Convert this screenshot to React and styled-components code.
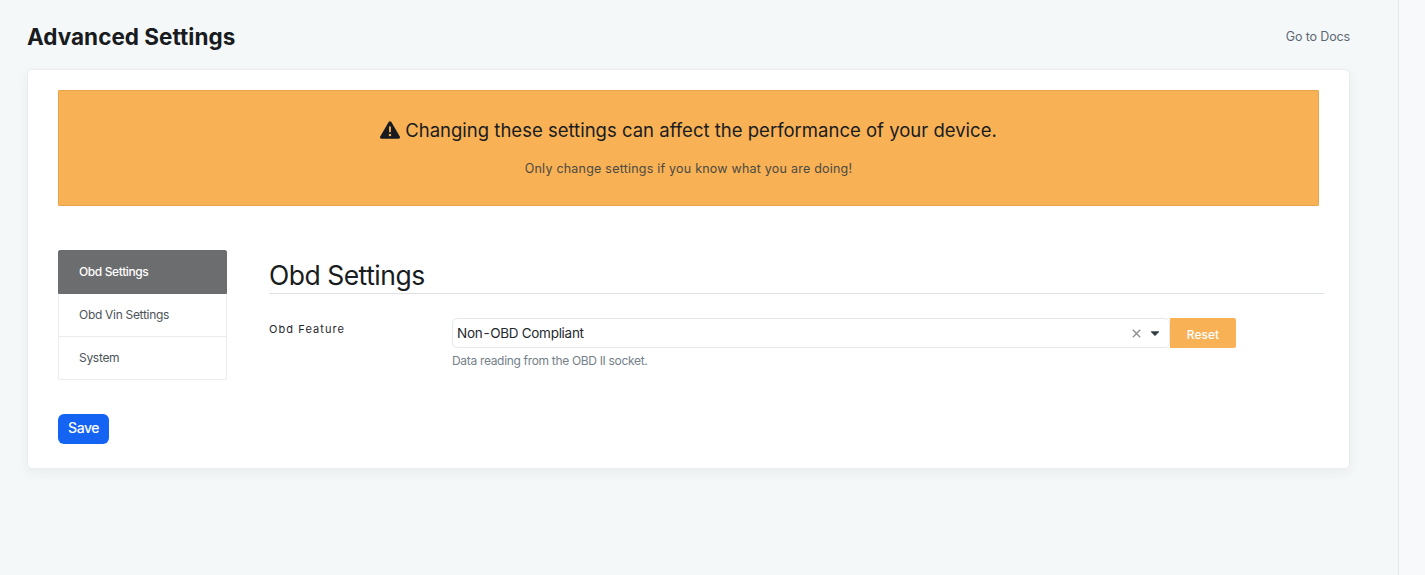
import React from "react";
import styled, { createGlobalStyle } from "styled-components";
import { FaTriangleExclamation } from "react-icons/fa6";

const GlobalStyle = createGlobalStyle`
  *, *::before, *::after { box-sizing: border-box; }
  html, body { margin: 0; padding: 0; }
  body {
    font-family: Inter, "Liberation Sans", sans-serif;
    font-size: 13px;
    color: #181c20;
    overflow: hidden;
  }
  h1, h2, p { margin: 0; font-weight: 400; }
  button { font-family: inherit; border: 0; padding: 0; margin: 0; }
`;

const Page = styled.div`
  display: flex;
  height: 575px;
  background: #f8f9fb;
`;

const Main = styled.main`
  width: 1399px;
  padding: 0 48px 0 27px;
  background: #f5f8f9;
  border-right: 1px solid #e4e7ea;
`;

const Header = styled.header`
  display: flex;
  justify-content: space-between;
  align-items: center;
  height: 69px;
  padding-top: 4px;
`;

const Title = styled.h1`
  font-size: 22.5px;
  line-height: 28px;
  font-weight: 700;
  letter-spacing: 0.02px;
  white-space: nowrap;
`;

const DocsLink = styled.a`
  font-size: 12.5px;
  line-height: 20px;
  letter-spacing: -0.13px;
  color: #5c6873;
`;

const Card = styled.section`
  height: 400px;
  padding: 20px 25px 0 30px;
  background: #fff;
  border: 1px solid #eaecee;
  border-radius: 5px;
  box-shadow: 0 4px 12px rgba(30, 50, 50, 0.06);
`;

const Warning = styled.div`
  width: 1261px;
  height: 116px;
  padding-top: 26px;
  background: #f8b155;
  border: 1px solid #e8a44b;
  border-radius: 1px;
  text-align: center;
`;

const WarningTitle = styled.p`
  display: flex;
  justify-content: center;
  align-items: center;
  height: 26px;
  gap: 5px;
  font-size: 18.5px;
  line-height: 26px;
  letter-spacing: 0.01px;
  white-space: nowrap;
`;

const WarningMessage = styled.span`
  padding-bottom: 1px;
`;

const WarningIcon = styled(FaTriangleExclamation)`
  margin-bottom: 1px;
`;

const WarningText = styled.p`
  margin-top: 16px;
  font-size: 12.5px;
  line-height: 20px;
  letter-spacing: 0.22px;
  color: #4b4a42;
`;

const Body = styled.div`
  display: flex;
  margin-top: 44px;
  height: 164px;
`;

const Menu = styled.nav`
  width: 169px;
  margin-right: 42px;
`;

const MenuItem = styled.a`
  display: flex;
  align-items: center;
  height: ${(p) => (p.$active ? 44 : 43)}px;
  padding: 0 0 1px 20px;
  font-size: 12px;
  letter-spacing: ${(p) => (p.$active ? "-0.38px" : "-0.3px")};
  font-weight: ${(p) => (p.$active ? 500 : 400)};
  color: ${(p) => (p.$active ? "#fff" : "#4d5359")};
  background: ${(p) => (p.$active ? "#6c6d6e" : "#fff")};
  border: 1px solid ${(p) => (p.$active ? "#6c6d6e" : "#ebebec")};
  border-top-width: ${(p) => (p.$active ? 1 : 0)}px;
  &:first-child { border-radius: 2px 2px 0 0; }
  &:last-child { border-radius: 0 0 2px 2px; }
`;

const Panel = styled.div`
  flex: 1;
`;

const PanelTitle = styled.h2`
  height: 44px;
  padding-top: 8px;
  font-size: 26.5px;
  line-height: 34px;
  letter-spacing: -0.5px;
  border-bottom: 1px solid #dee1e3;
`;

const Field = styled.div`
  display: flex;
  margin-top: 24px;
`;

const Label = styled.label`
  width: 183px;
  padding-top: 2px;
  font-size: 11px;
  line-height: 18px;
  letter-spacing: 1.08px;
  color: #1f272e;
`;

const ControlRow = styled.div`
  display: flex;
`;

const Select = styled.div`
  display: flex;
  align-items: center;
  width: 718px;
  height: 30px;
  padding: 0 10px 0 4px;
  border: 1px solid #e6e8ed;
  border-radius: 5px;
  font-size: 13.5px;
  letter-spacing: -0.28px;
  color: #24292e;
`;

const Value = styled.span`
  flex: 1;
  padding-bottom: 1px;
`;

const Hyphen = styled.span`
  letter-spacing: 0.5px;
  margin-left: 1px;
`;

const ClearIcon = styled.svg`
  margin-right: 10px;
`;

const ResetButton = styled.button`
  width: 66px;
  height: 30px;
  padding-top: 3px;
  background: #f8b155;
  border-radius: 0 2px 2px 0;
  color: #fff;
  font-size: 12px;
  font-weight: 500;
  letter-spacing: 0;
`;

const Hint = styled.p`
  margin-top: 3px;
  font-size: 12px;
  line-height: 20px;
  letter-spacing: -0.32px;
  color: #74808a;
`;

const SaveButton = styled.button`
  width: 51px;
  height: 30px;
  padding-bottom: 3px;
  background: #1463f3;
  border-radius: 6px;
  color: #fff;
  font-size: 14px;
  font-weight: 500;
  letter-spacing: -0.5px;
`;

export default function App() {
  return (
    <Page>
      <GlobalStyle />
      <Main>
        <Header>
          <Title>Advanced Settings</Title>
          <DocsLink>Go to Docs</DocsLink>
        </Header>
        <Card>
          <Warning>
            <WarningTitle>
              <WarningIcon size={20} />
              <WarningMessage>Changing these settings can affect the performance of your device.</WarningMessage>
            </WarningTitle>
            <WarningText>Only change settings if you know what you are doing!</WarningText>
          </Warning>
          <Body>
            <Menu>
              <MenuItem $active>Obd Settings</MenuItem>
              <MenuItem>Obd Vin Settings</MenuItem>
              <MenuItem>System</MenuItem>
            </Menu>
            <Panel>
              <PanelTitle>Obd Settings</PanelTitle>
              <Field>
                <Label>Obd Feature</Label>
                <div>
                  <ControlRow>
                    <Select>
                      <Value>Non<Hyphen>-</Hyphen>OBD Compliant</Value>
                      <ClearIcon width="9" height="9" viewBox="0 0 9 9">
                        <path d="M0.8 0.8L8.2 8.2M8.2 0.8L0.8 8.2" stroke="#8d9195" strokeWidth="1.4" />
                      </ClearIcon>
                      <svg width="8" height="5" viewBox="0 0 8 5">
                        <path d="M0 0.2H8V1L4.4 4.7H3.6L0 1Z" fill="#343d44" />
                      </svg>
                    </Select>
                    <ResetButton>Reset</ResetButton>
                  </ControlRow>
                  <Hint>Data reading from the OBD II socket.</Hint>
                </div>
              </Field>
            </Panel>
          </Body>
          <SaveButton>Save</SaveButton>
        </Card>
      </Main>
    </Page>
  );
}
